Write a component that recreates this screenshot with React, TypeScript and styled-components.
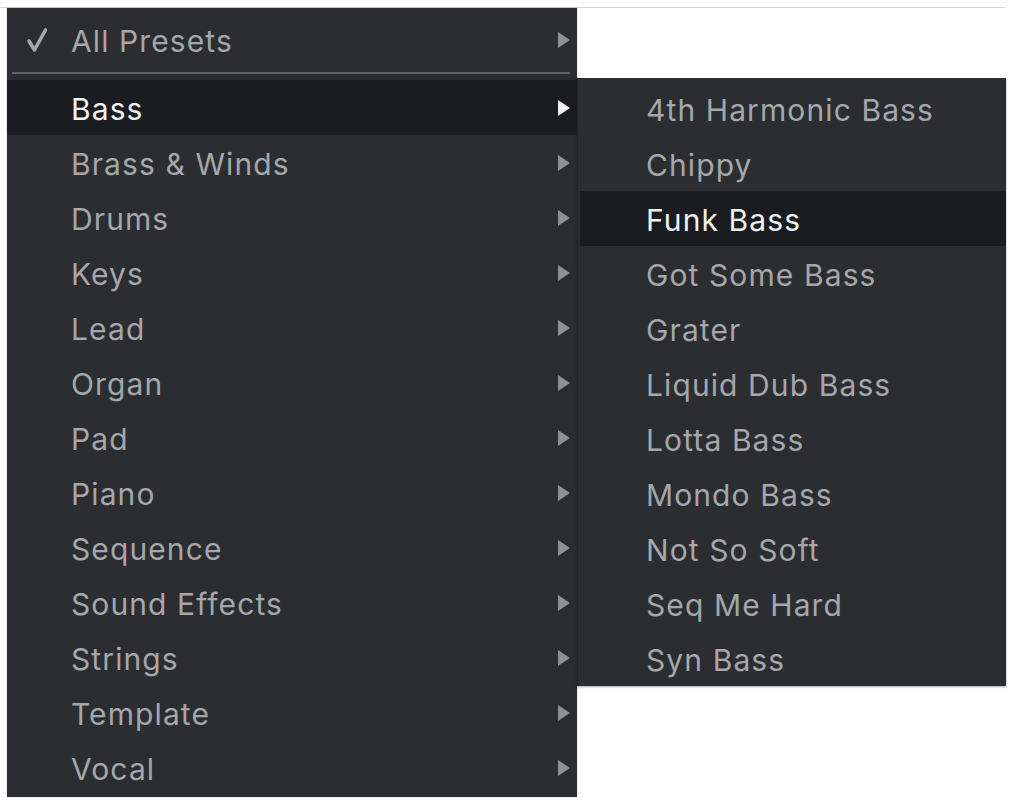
import React from "react";
import styled, { createGlobalStyle } from "styled-components";

const Global = createGlobalStyle`
  html, body { margin: 0; padding: 0; background: #ffffff; }
  body { font-family: Inter, "Noto Sans", sans-serif; -webkit-font-smoothing: antialiased; }
`;

const Page = styled.div`
  width: 1009px;
  height: 801px;
  padding-top: 7px;
  box-sizing: border-box;
  overflow: hidden;
`;

const TopRule = styled.div`
  width: 1005px;
  border-top: 1px solid #d4d4d4;
`;

const MenuArea = styled.div`
  display: flex;
  align-items: flex-start;
  padding-left: 7px;
`;

const MainMenu = styled.div`
  width: 570px;
  background: #2b2d31;
  display: flex;
  flex-direction: column;
  padding-bottom: 2px;
  box-shadow: 0 0 2px rgba(0, 0, 0, 0.25);
`;

const SubMenu = styled.div`
  width: 428px;
  margin-top: 70px;
  background: #2b2d31;
  border-left: 1px solid #222326;
  display: flex;
  flex-direction: column;
  padding-top: 3px;
  box-shadow: 0 1px 2px rgba(0, 0, 0, 0.35);
`;

const Row = styled.div<{ $active?: boolean; $height?: number; $indent?: number; $inset?: number }>`
  height: ${(p) => p.$height ?? 55}px;
  display: flex;
  align-items: center;
  padding-left: ${(p) => p.$indent ?? 64}px;
  padding-right: 7px;
  margin-left: ${(p) => p.$inset ?? 0}px;
  background: ${(p) => (p.$active ? "#1b1c1f" : "transparent")};
  color: ${(p) => (p.$active ? "#f2f2f2" : "#a5a7ab")};
  font-size: 30px;
  letter-spacing: 1.1px;
  position: relative;
`;

const Check = styled.svg`
  position: absolute;
  left: 19px;
  top: 50%;
  width: 22px;
  height: 26px;
  transform: translateY(-50%);
  fill: none;
  stroke: #a5a7ab;
  stroke-width: 3.6;
  stroke-linecap: round;
  stroke-linejoin: round;
`;

const Label = styled.span`
  flex: 1;
  white-space: nowrap;
  padding-top: 2px;
`;

const Arrow = styled.svg<{ $active?: boolean }>`
  width: 12px;
  height: 16px;
  fill: ${(p) => (p.$active ? "#f2f2f2" : "#8f9195")};
  flex: none;
`;

const Separator = styled.div`
  height: 2px;
  margin: 0 7px 6px 5px;
  background: #5f6165;
`;

const categories = [
  "Bass",
  "Brass & Winds",
  "Drums",
  "Keys",
  "Lead",
  "Organ",
  "Pad",
  "Piano",
  "Sequence",
  "Sound Effects",
  "Strings",
  "Template",
  "Vocal",
];

const presets = [
  "4th Harmonic Bass",
  "Chippy",
  "Funk Bass",
  "Got Some Bass",
  "Grater",
  "Liquid Dub Bass",
  "Lotta Bass",
  "Mondo Bass",
  "Not So Soft",
  "Seq Me Hard",
  "Syn Bass",
];

const Tri = ({ active }: { active?: boolean }) => (
  <Arrow $active={active} viewBox="0 0 12 16">
    <path d="M0 0 L12 8 L0 16 Z" />
  </Arrow>
);

export default function App() {
  return (
    <Page>
      <Global />
      <TopRule />
      <MenuArea>
        <MainMenu>
          <Row $height={64}>
            <Check viewBox="0 0 22 26">
              <path d="M3 14 L8.5 23 L19.5 3" />
            </Check>
            <Label>All Presets</Label>
            <Tri />
          </Row>
          <Separator />
          {categories.map((c) => (
            <Row key={c} $active={c === "Bass"}>
              <Label>{c}</Label>
              <Tri active={c === "Bass"} />
            </Row>
          ))}
        </MainMenu>
        <SubMenu>
          {presets.map((p) => {
            const active = p === "Funk Bass";
            return (
              <Row key={p} $indent={active ? 66 : 68} $inset={active ? 2 : 0} $active={active}>
                <Label>{p}</Label>
              </Row>
            );
          })}
        </SubMenu>
      </MenuArea>
    </Page>
  );
}
